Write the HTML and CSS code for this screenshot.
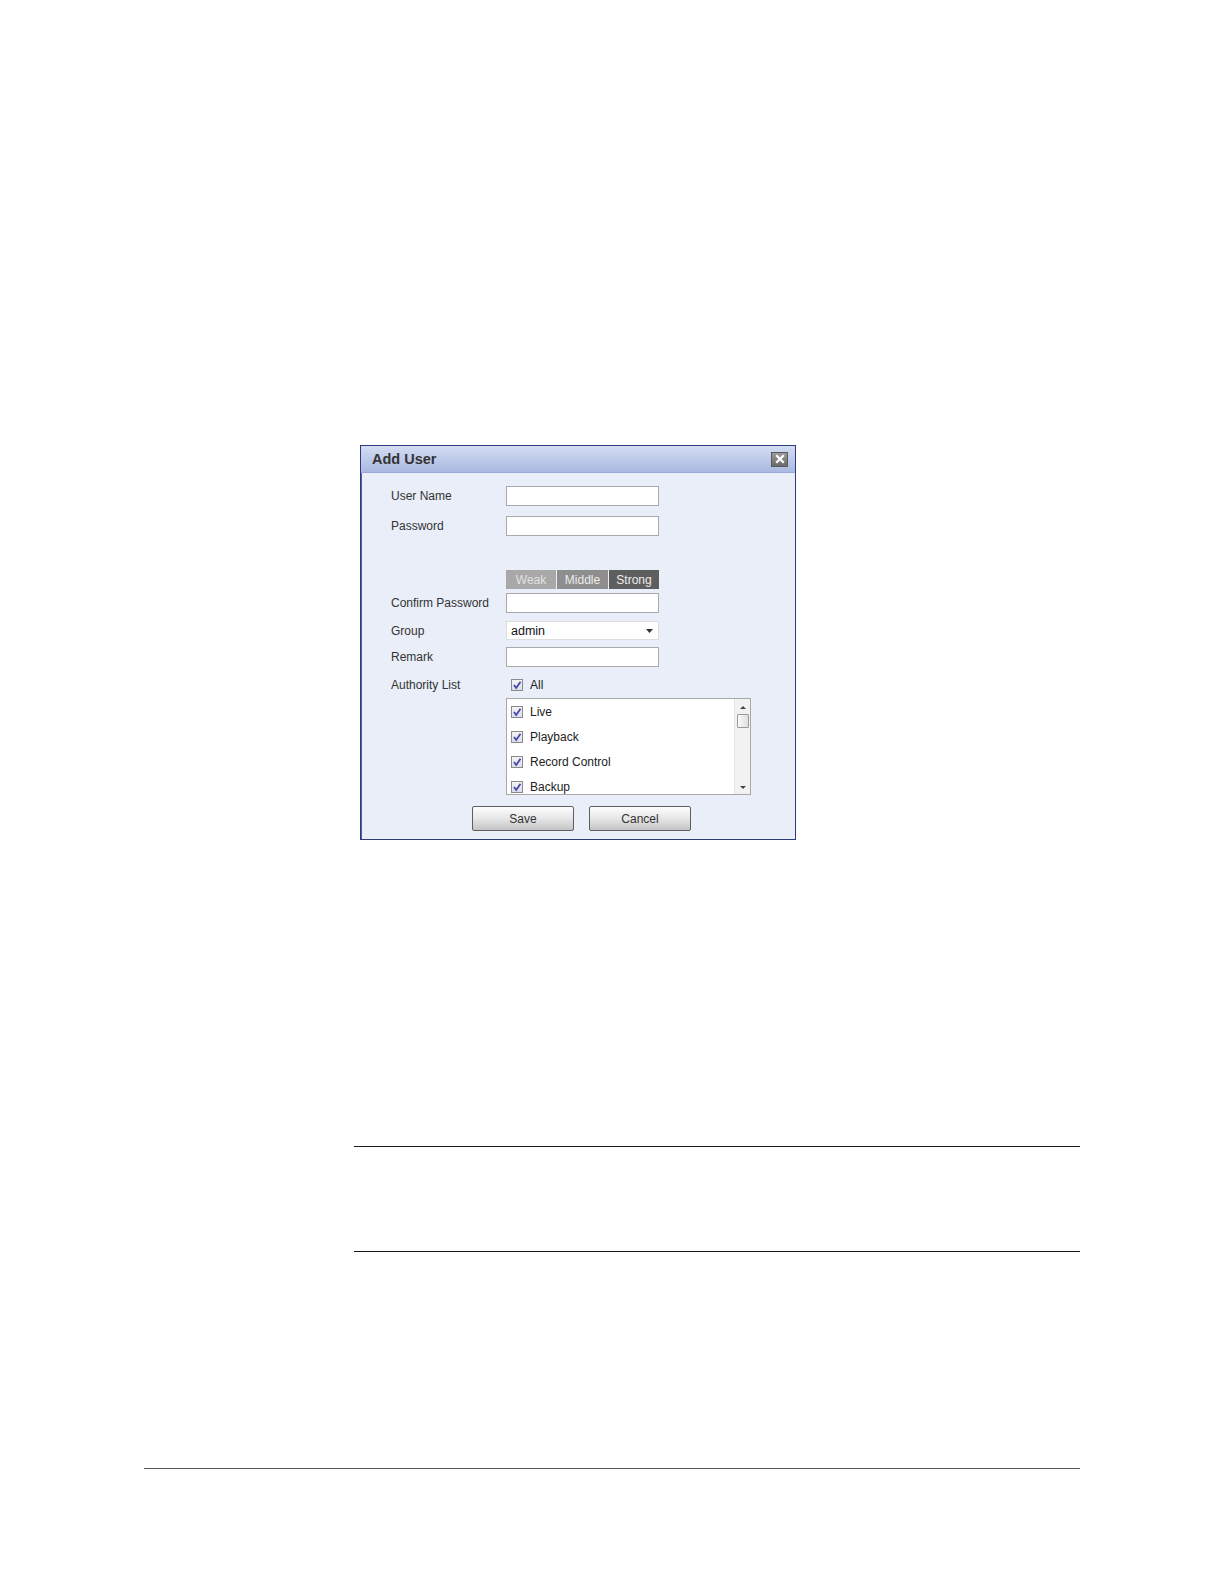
FILE: index.html
```html
<!DOCTYPE html>
<html>
<head>
<meta charset="utf-8">
<link rel="stylesheet" href="styles.css">
</head>
<body>
<div class="page">
  <div class="dialog">
    <div class="titlebar">
      <span class="title">Add User</span>
      <span class="close"><svg width="10" height="10" viewBox="0 0 10 10"><path d="M2 2 L8 8 M8 2 L2 8" stroke="#fff" stroke-width="2.2" stroke-linecap="square"/></svg></span>
    </div>
    <div class="body">
      <div class="row r-user"><span class="label">User Name</span><span class="input"></span></div>
      <div class="row r-pass"><span class="label">Password</span><span class="input"></span></div>
      <div class="row r-strength"><span class="label"></span>
        <div class="strength"><span class="s weak">Weak</span><span class="s middle">Middle</span><span class="s strong">Strong</span></div>
      </div>
      <div class="row r-confirm"><span class="label">Confirm Password</span><span class="input"></span></div>
      <div class="row r-group"><span class="label">Group</span><span class="input select"><span class="val">admin</span><svg class="arrow" width="7" height="4" viewBox="0 0 7 4"><path d="M0 0 H7 L3.5 4 Z" fill="#333"/></svg></span></div>
      <div class="row r-remark"><span class="label">Remark</span><span class="input"></span></div>
      <div class="row r-auth"><span class="label">Authority List</span>
        <span class="check-item all"><span class="cb"><svg width="10" height="10" viewBox="0 0 10 10"><path d="M2 5 L4.2 8 L8.5 1.8" stroke="#4848a8" stroke-width="1.8" fill="none"/></svg></span>All</span>
      </div>
      <div class="row r-list"><span class="label"></span>
        <div class="listbox">
          <div class="items">
            <div class="check-item"><span class="cb"><svg width="10" height="10" viewBox="0 0 10 10"><path d="M2 5 L4.2 8 L8.5 1.8" stroke="#4848a8" stroke-width="1.8" fill="none"/></svg></span>Live</div>
            <div class="check-item"><span class="cb"><svg width="10" height="10" viewBox="0 0 10 10"><path d="M2 5 L4.2 8 L8.5 1.8" stroke="#4848a8" stroke-width="1.8" fill="none"/></svg></span>Playback</div>
            <div class="check-item"><span class="cb"><svg width="10" height="10" viewBox="0 0 10 10"><path d="M2 5 L4.2 8 L8.5 1.8" stroke="#4848a8" stroke-width="1.8" fill="none"/></svg></span>Record Control</div>
            <div class="check-item"><span class="cb"><svg width="10" height="10" viewBox="0 0 10 10"><path d="M2 5 L4.2 8 L8.5 1.8" stroke="#4848a8" stroke-width="1.8" fill="none"/></svg></span>Backup</div>
          </div>
          <div class="scrollbar">
            <svg class="sarrow" width="6" height="3" viewBox="0 0 6 3"><path d="M0 3 H6 L3 0 Z" fill="#444"/></svg>
            <span class="thumb"></span>
            <span class="grow"></span>
            <svg class="sarrow" width="6" height="3" viewBox="0 0 6 3"><path d="M0 0 H6 L3 3 Z" fill="#444"/></svg>
          </div>
        </div>
      </div>
      <div class="buttons"><span class="btn">Save</span><span class="btn">Cancel</span></div>
    </div>
  </div>
  <div class="note">
    <div class="rule"></div>
    <div class="note-space"></div>
    <div class="rule"></div>
  </div>
  <div class="footer-rule"></div>
</div>
</body>
</html>
```
FILE: styles.css
```css
* { box-sizing: border-box; }
html, body { margin: 0; padding: 0; background: #fff; }
body { font-family: "Liberation Sans", Arial, sans-serif; }
.page { width: 1224px; height: 1584px; padding-top: 445px; }

.dialog {
  margin-left: 360px;
  width: 436px;
  height: 395px;
  border: 1px solid #2e3c7e;
  box-shadow: inset 1px 0 0 #5060a0;
  background: #e9eef9;
  display: flex;
  flex-direction: column;
}
.titlebar {
  height: 27px;
  background: linear-gradient(#d3dcf2, #aab9e2);
  border-bottom: 1px solid #9aa9d6;
  display: flex;
  align-items: center;
  padding: 0 7px 0 11px;
}
.title { font-size: 14.5px; font-weight: bold; color: #333; flex: 1; }
.close {
  width: 17px; height: 15px;
  background: linear-gradient(#9a9a9a, #6a6a6a);
  border: 1px solid #5a5a5a;
  display: flex; align-items: center; justify-content: center;
}
.body { padding-left: 30px; display: flex; flex-direction: column; }
.row { display: flex; align-items: center; }
.label { width: 115px; font-size: 12px; color: #333; }
.input {
  width: 153px; height: 20px;
  background: #fff;
  border: 1px solid #a9a9a9;
}
.r-user { margin-top: 13px; }
.r-pass { margin-top: 10px; }
.r-strength { margin-top: 34px; }
.r-confirm { margin-top: 4px; }
.r-group { margin-top: 8px; }
.r-remark { margin-top: 7px; }
.r-auth { margin-top: 12px; height: 12px; }
.r-list { margin-top: 7px; align-items: flex-start; }

.select { height: 19px; border-color: #ddd; display: flex; align-items: center; padding: 0 5px 0 4px; }
.val { flex: 1; font-size: 12.5px; color: #111; }

.strength { display: flex; width: 153px; height: 19px; gap: 1px; }
.s { display: flex; align-items: center; justify-content: center; font-size: 12px; color: #ececec; }
.weak { width: 50px; background: #a8a8a8; color: #e2e2e2; }
.middle { width: 51px; background: #8e8e8e; }
.strong { width: 50px; background: #5e5e5e; }

.check-item { display: flex; align-items: center; font-size: 12px; color: #222; }
.all { margin-left: 5px; }
.cb {
  width: 12px; height: 12px;
  border: 1px solid #8a8a8a;
  background: linear-gradient(#f4f4f4, #dcdcf0);
  display: flex; align-items: center; justify-content: center;
  margin-right: 7px;
}

.listbox {
  width: 245px; height: 97px;
  background: #fff;
  border: 1px solid #a9a9a9;
  display: flex;
}
.items { flex: 1; padding: 6px 0 0 4px; display: flex; flex-direction: column; gap: 11px; }
.scrollbar {
  width: 16px;
  background: #f2f2f2;
  border-left: 1px solid #e4e4e4;
  display: flex; flex-direction: column; align-items: center;
  padding: 7px 0 5px;
}
.thumb {
  margin-top: 5px;
  width: 12px; height: 14px;
  border: 1px solid #9a9a9a;
  border-radius: 1px;
  background: linear-gradient(90deg, #fafafa, #e0e0e0);
}
.grow { flex: 1; }

.buttons { display: flex; gap: 15px; margin-top: 11px; padding-left: 81px; }
.btn {
  width: 102px; height: 25px;
  border: 1px solid #5e5e5e;
  border-radius: 2px;
  background: linear-gradient(#fdfdfd, #e6e6e6 50%, #c4c4c4);
  display: flex; align-items: center; justify-content: center;
  font-size: 12px; color: #333;
}

.note { margin-left: 354px; width: 726px; margin-top: 306px; }
.rule { height: 1px; background: #1a1a1a; }
.note-space { height: 104px; }
.footer-rule { margin-left: 144px; width: 936px; height: 1px; background: #555; margin-top: 216px; }
```
